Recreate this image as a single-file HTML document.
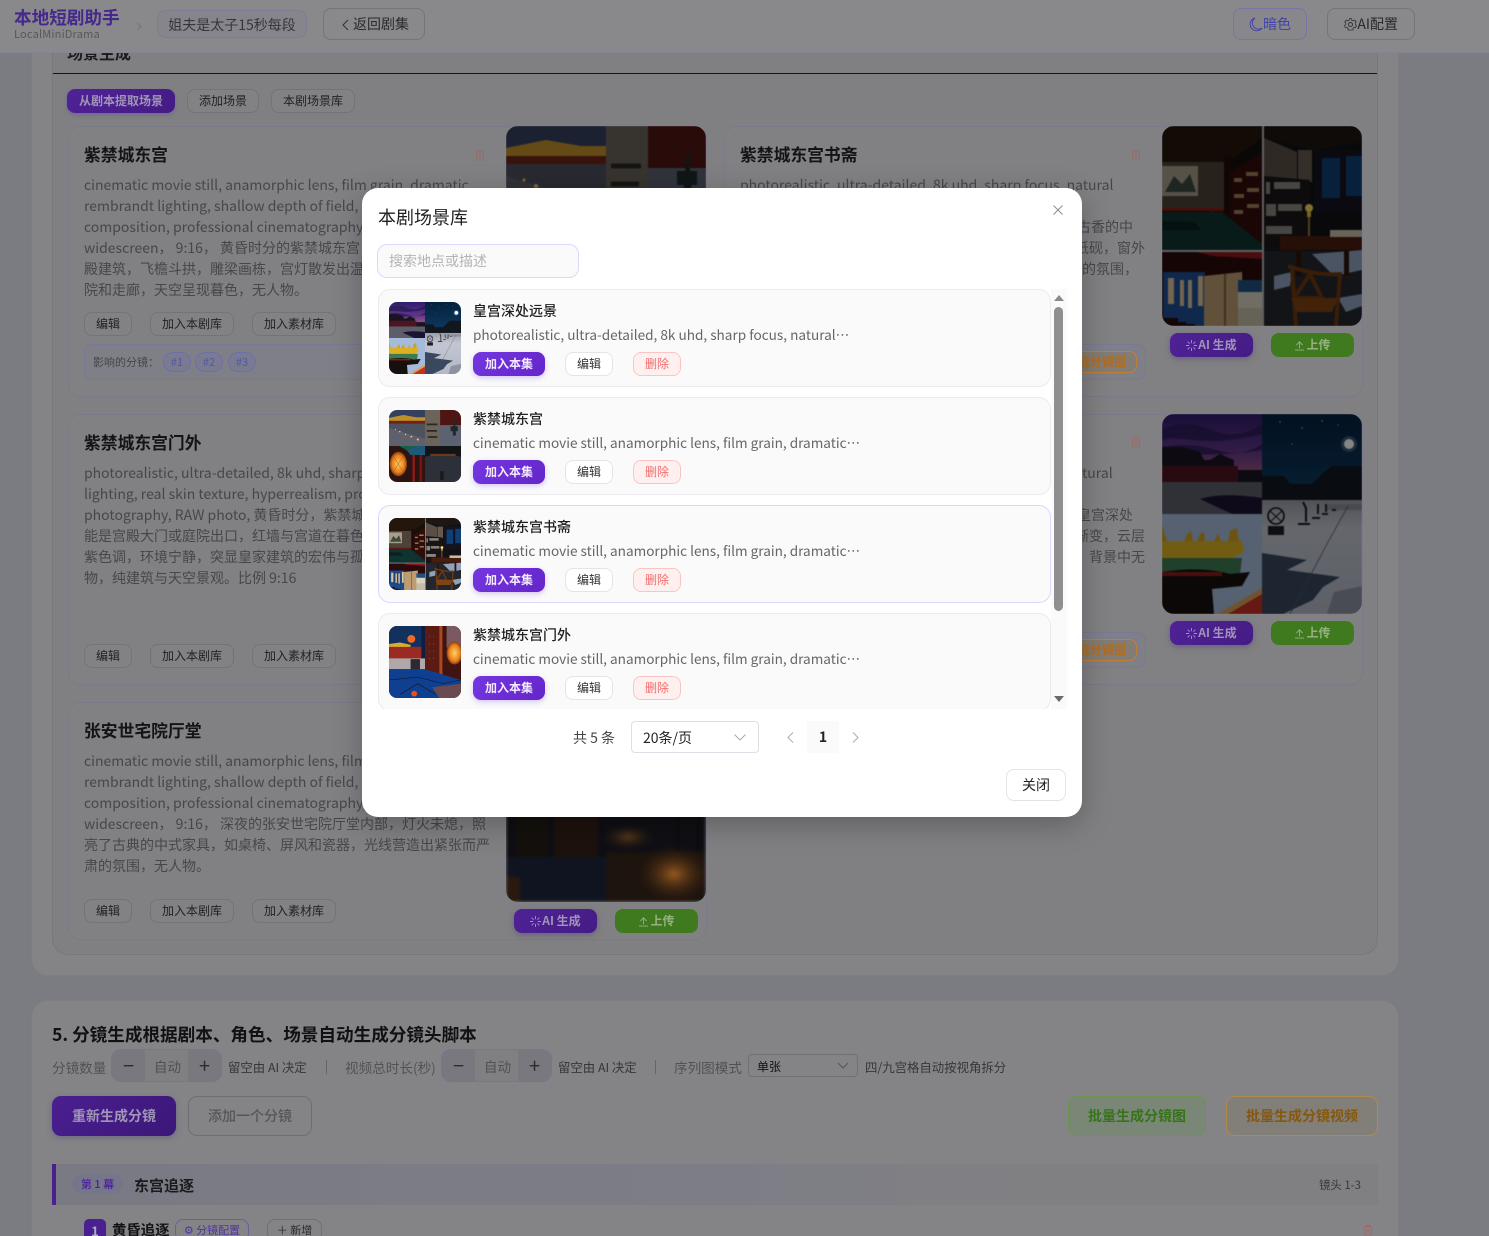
<!DOCTYPE html>
<html lang="zh"><head><meta charset="utf-8"><title>本剧场景库</title>
<style>
*{box-sizing:border-box;margin:0;padding:0}
html,body{width:1489px;height:1236px;overflow:hidden}
body{position:relative;background:#7b7b82;font-family:"Noto Sans CJK SC","Liberation Sans",sans-serif;color:#222}
.a{position:absolute;white-space:nowrap}
.panel{position:absolute;background:#848486;border-radius:16px;box-shadow:0 0 0 1px #7e7e82}
.inner{position:absolute;background:#808083;border:1px solid #77777c;border-top:none;border-radius:0 0 16px 16px}
.card{position:absolute;background:#818184;border:1px solid #7a7a88;border-radius:12px;width:639px}
.t{position:absolute;font-size:16.8px;font-weight:700;color:#141416;line-height:24px;white-space:nowrap}
.d{position:absolute;font-size:14px;line-height:21px;color:#47474b;white-space:nowrap}
.b{position:absolute;display:flex;align-items:center;justify-content:center;border:1px solid #737378;border-radius:8px;font-size:12px;color:#222226;white-space:nowrap;height:24px;background:#828285;padding-bottom:2px}
.img{position:absolute;width:200px;height:200px;border-radius:12px;overflow:hidden}
.img svg{display:block;width:200px;height:200px;filter:brightness(.52) blur(.4px)}
.ai{background:linear-gradient(135deg,#4f2296,#441c84);color:#a094b8;border:none;font-weight:700;box-shadow:0 2px 6px #66607e;border-radius:8px;width:83px;height:24px;font-size:12px;gap:1px}
.up{background:#3f7a1f;color:#98b086;border:none;font-weight:700;border-radius:8px;width:83px;height:24px;font-size:12px;gap:1px}
.ai svg,.up svg{width:11px;height:11px;filter:none;flex:none;margin-top:2px}
.aff{position:absolute;height:36px;width:406px;border:1px solid #787898;border-radius:8px;background:#7f7f88;font-size:11px;color:#454549;line-height:34px;padding-left:8px;white-space:nowrap}
.tag{position:absolute;top:7px;height:20px;width:28px;border:1px solid #6f6fa8;border-radius:10px;background:#7a7a90;color:#5058a8;font-size:11px;line-height:18px;text-align:center}
.modal{position:absolute;left:362px;top:188px;width:720px;height:629px;background:#fff;border-radius:16px;box-shadow:0 8px 30px rgba(0,0,0,.25)}
.list{position:absolute;left:378px;top:289px;width:689px;height:420px;overflow:hidden}
.item{position:absolute;left:0;width:673px;height:98px;background:#fafafa;border:1px solid #ebebef;border-radius:12px}
.th{position:absolute;left:10px;top:12px;width:72px;height:72px;border-radius:8px;overflow:hidden}
.th svg{display:block;width:72px;height:72px}
.n{position:absolute;left:94px;top:11px;font-size:14px;line-height:21px;color:#1f1f1f;font-weight:500;white-space:nowrap}
.s{position:absolute;left:94px;top:34px;font-size:13.6px;line-height:21px;color:#666;white-space:nowrap}
.add,.ed,.del{position:absolute;top:62px;height:24px;display:flex;align-items:center;justify-content:center;font-size:12px;border-radius:8px;padding-bottom:2px}
.add{left:94px;width:72px;background:linear-gradient(135deg,#7436e0,#6426c8);color:#f3eaff;font-weight:700;box-shadow:0 2px 6px #d5c5f5}
.ed{left:186px;width:48px;background:#fff;border:1px solid #e4e4e8;color:#333}
.del{left:254px;width:48px;background:#fff0f0;border:1px solid #fbc4c4;color:#f56c6c}
.ni{position:absolute;top:1049px;width:111px;height:33px;border:1px solid #767690;border-radius:10px;background:#808083;overflow:hidden}
.ni i{position:absolute;top:0;width:33px;height:33px;background:#78787e;color:#2c2c2c;font-style:normal;font-size:20px;line-height:29px;text-align:center}
.ni b{position:absolute;left:33px;width:45px;top:0;text-align:center;font-weight:400;font-size:13.6px;line-height:32px;color:#505055}
.h{position:absolute;font-size:13.6px;color:#525256;line-height:20px;white-space:nowrap}
.sm{position:absolute;font-size:12.4px;color:#36363a;line-height:18px;white-space:nowrap}
.big{position:absolute;top:1096px;height:40px;display:flex;align-items:center;justify-content:center;font-size:14px;font-weight:700;border-radius:9px;white-space:nowrap}
</style></head><body>
<div style="position:absolute;left:0;top:0;width:1489px;height:1236px;overflow:hidden">

<svg width="0" height="0" style="position:absolute"><defs>
<linearGradient id="gs1" x1="0" y1="0" x2="0" y2="1"><stop offset="0" stop-color="#2f1c6e"/><stop offset=".35" stop-color="#5e3488"/><stop offset=".6" stop-color="#9a5480"/></linearGradient>
<linearGradient id="gs2" x1="0" y1="0" x2="0" y2="1"><stop offset="0" stop-color="#05203e"/><stop offset=".4" stop-color="#0d3a60"/></linearGradient>
<linearGradient id="plz" x1="0" y1="0" x2="0" y2="1"><stop offset="0" stop-color="#9a9ea8"/><stop offset=".25" stop-color="#c2c6d2"/><stop offset="1" stop-color="#b4b8c6"/></linearGradient>
<radialGradient id="lan"><stop offset="0" stop-color="#ffd060"/><stop offset=".7" stop-color="#e8801c"/><stop offset="1" stop-color="#8a3a10"/></radialGradient>
<radialGradient id="glow"><stop offset="0" stop-color="#d8802c"/><stop offset="1" stop-color="#1c1410" stop-opacity="0"/></radialGradient>

<symbol id="sA" viewBox="0 0 200 200">
<rect width="100" height="100" fill="url(#gs1)"/>
<path d="M0 15Q25 5 50 16T100 10V20Q60 30 30 26T0 28ZM0 33Q30 28 55 36T100 30V36Q60 42 30 40T0 40Z" fill="#2a1a55" opacity=".8"/>
<path d="M0 33H20L38 38L42 46H48L58 40L72 46V56H100V68H0Z" fill="#191420"/>
<rect y="52" width="76" height="16" fill="#4c1620"/>
<rect y="68" width="100" height="32" fill="#5c5c6a"/>
<path d="M38 85Q60 78 100 84V100H70Z" fill="#1b1332"/>
<rect x="100" width="100" height="200" fill="url(#gs2)"/>
<circle cx="187" cy="30" r="5" fill="#fff"/><circle cx="187" cy="30" r="8" fill="#fff" opacity=".2"/>
<g fill="#fff"><circle cx="118" cy="8" r=".6"/><circle cx="140" cy="14" r=".6"/><circle cx="160" cy="7" r=".6"/><circle cx="130" cy="30" r=".5"/><circle cx="176" cy="11" r=".5"/></g>
<path d="M100 62H122L128 70H150L160 60L170 52H200V86H100Z" fill="#11171f"/>
<rect x="100" y="86" width="100" height="114" fill="url(#plz)"/>
<rect x="165" y="90" width="35" height="6" fill="#8a8e98"/>
<path d="M100 139L145 146L125 156L178 163L161 173L151 186L121 200H100Z" fill="#38485f"/>
<path d="M165 200L172 178L200 172V200Z" fill="#8e93a2"/>
<path d="M128 200L165 130L186 92" stroke="#555" stroke-width=".8" fill="none"/>
<circle cx="114" cy="102" r="8" fill="none" stroke="#111" stroke-width="1.6"/><path d="M108 97L120 108M120 97L108 108" stroke="#111"/><rect x="106" y="112" width="16" height="9" fill="#1d1d22"/>
<path d="M136 110h12M144 108V94l-3-6" stroke="#15151a" fill="none" stroke-width="2"/><path d="M150 104h8M156 100V90M160 100h6M164 98V90M170 96h4" stroke="#222" stroke-width="2"/>
<rect y="100" width="100" height="100" fill="#a6bada"/>
<path d="M0 110l5 18H0ZM22 128l3-8 4-3 2 11ZM35 128l3-8 4-2 1 10ZM52 128l4-9 3 9ZM66 128l2-11 7-3 2 14Z" fill="#d0a020"/>
<path d="M0 127H80L82 138L70 144H0Z" fill="#dcb020"/>
<path d="M0 144H80L78 160H0Z" fill="#3f7b52"/>
<path d="M0 158Q40 152 68 160L88 158L80 172L50 175L52 200H0Z" fill="#16100e"/>
<path d="M0 158H60V162H0Z" fill="#8c1c1a"/>
<path d="M60 200L100 177V200Z" fill="#c43022"/><path d="M55 200L100 174V180L66 200Z" fill="#d8a058"/>
</symbol>

<symbol id="sB" viewBox="0 0 200 200">
<rect width="100" height="100" fill="#33405f"/>
<path d="M0 22L40 14L75 20L100 20V36H0Z" fill="#c09028"/>
<rect y="30" width="100" height="8" fill="#6c2418"/>
<rect y="38" width="100" height="62" fill="#4e515e"/>
<path d="M0 50L100 80V100H0Z" fill="#5e606c"/>
<g fill="#ffc860"><circle cx="30" cy="60" r="2"/><circle cx="46" cy="68" r="2"/><circle cx="62" cy="74" r="2.5"/><circle cx="80" cy="82" r="3"/><circle cx="18" cy="54" r="1.5"/></g>
<rect x="100" width="100" height="100" fill="#4e1514"/>
<rect x="100" y="42" width="100" height="58" fill="#5c6272"/>
<rect x="100" width="42" height="100" fill="#6a645a"/>
<path d="M105 40h30M105 58h28M108 75h26" stroke="#2c2824" stroke-width="5"/>
<path d="M170 20V22M182 25L185 70L178 70Z M172 46H190V58H172Z" fill="#1e2828" stroke="#1e2828" stroke-width="2"/>
<rect y="100" width="100" height="100" fill="#2c1410"/>
<path d="M40 100H100V125H60Z" fill="#1d5a7a"/><path d="M28 100H80L50 112Z" fill="#14604a"/>
<rect x="65" y="125" width="7" height="75" fill="#8a1c1c"/><rect x="85" y="125" width="7" height="75" fill="#7a1414"/>
<ellipse cx="26" cy="150" rx="24" ry="34" fill="url(#lan)"/>
<path d="M14 130L38 170M38 130L14 170" stroke="#9a5018" stroke-width="1.2"/>
<rect x="100" y="100" width="100" height="100" fill="#131416"/>
<path d="M100 130Q150 115 200 130V200H100Z" fill="#2c3038"/><path d="M115 122h70v6h-70z" fill="#6a3a20"/>
<rect x="142" y="170" width="10" height="24" fill="#1a1a1a"/>
</symbol>

<symbol id="sC" viewBox="0 0 200 200">
<rect width="200" height="200" fill="#b8b8bc"/>
<rect width="100" height="124" fill="#14100c"/>
<path d="M0 0H100V12L60 40H0Z" fill="#24160c"/>
<rect y="36" width="62" height="46" fill="#4c4238"/>
<rect y="40" width="36" height="30" fill="#a89d88"/><path d="M3 66L12 50L20 58L28 48L34 66Z" fill="#3c4a42"/>
<rect x="62" y="30" width="8" height="70" fill="#1e0e08"/>
<path d="M68 100V46L100 26V118Z" fill="#300c0a"/>
<g stroke="#9c8058" stroke-width="4"><path d="M72 54h8M84 48h12M72 70h10M85 64h12M72 86h9M85 80h12"/></g>
<rect y="82" width="62" height="3" fill="#8c1a14"/><rect x="48" y="84" width="3" height="24" fill="#6a120e"/>
<path d="M0 86H60L100 118V124H0Z" fill="#0f332e"/><path d="M0 95L32 96L40 104H0Z" fill="#0a1f22"/>
<rect y="126" width="100" height="74" fill="#2a0a0a"/>
<path d="M35 126H100V133L50 130Z" fill="#8c181c"/>
<g fill="#1c4c90"><rect x="1" y="146" width="15" height="46"/><rect x="16" y="146" width="8" height="50"/><rect x="24" y="146" width="9" height="52"/><rect x="33" y="146" width="10" height="54"/></g>
<g fill="#dcc59c"><rect x="6" y="152" width="6" height="26"/><rect x="18" y="154" width="4" height="26"/><rect x="26" y="154" width="4" height="28"/><rect x="36" y="150" width="5" height="30"/></g>
<path d="M42 200V150L80 146L82 200Z" fill="#bc9c70"/><rect x="62" y="148" width="2" height="52" fill="#7a6040"/>
<rect x="76" y="154" width="24" height="12" fill="#205080"/><rect x="76" y="166" width="24" height="16" fill="#d8d4c0"/><rect x="76" y="182" width="24" height="18" fill="#c4bca4"/>
<rect x="102" width="98" height="200" fill="#111116"/>
<path d="M102 12L135 26V54H102Z" fill="#5a4e46"/><path d="M136 24H150V56H136Z" fill="#665a50"/>
<path d="M102 0H200V16L150 24L102 12Z" fill="#1d1612"/>
<rect x="152" y="24" width="48" height="62" fill="#14141f"/>
<g fill="#0e4076"><rect x="160" y="32" width="18" height="40"/><rect x="184" y="30" width="16" height="40"/></g>
<path d="M102 50L148 54V122L120 132H102Z" fill="#191517"/>
<g fill="#8a867e"><rect x="104" y="56" width="4" height="12"/><rect x="112" y="56" width="26" height="7"/><rect x="104" y="78" width="10" height="12"/><rect x="116" y="78" width="24" height="7"/><rect x="104" y="100" width="26" height="8"/></g>
<circle cx="147" cy="82" r="4" fill="#f8d860"/><rect x="145" y="85" width="4" height="6" fill="#dcc040"/><rect x="146" y="91" width="2" height="20" fill="#9a7a30"/>
<rect x="102" y="125" width="98" height="75" fill="#24262e"/>
<path d="M150 128L200 124V144L172 150ZM176 172L200 168V180L184 186ZM112 150L130 146L128 160L112 164Z" fill="#8ea2bc"/>
<path d="M118 110H200V124H118Z" fill="#4a1c0c"/><rect x="134" y="124" width="5" height="26" fill="#2c140a"/><rect x="182" y="124" width="5" height="26" fill="#2c140a"/>
<rect x="168" y="104" width="32" height="7" fill="#c8c0a8"/>
<path d="M126 140Q155 150 180 148M130 142L134 200M178 148L174 200M148 148L160 172H132Z" stroke="#6e380e" stroke-width="4" fill="none"/>
<path d="M130 172H176L170 186H134Z" fill="#7e4412"/>
</symbol>

<symbol id="sD" viewBox="0 0 200 200">
<rect width="200" height="200" fill="#101c40"/>
<rect width="90" height="80" fill="#12315e"/>
<path d="M0 50L30 46L60 52V60H0Z" fill="#d8ac30"/><rect y="58" width="90" height="34" fill="#9a2a22"/>
<circle cx="62" cy="36" r="11" fill="#f06a28"/>
<path d="M100 0H200V160H100Z" fill="#401410"/>
<path d="M100 0H150V165H100Z" fill="#5a1c12"/><rect x="140" y="0" width="8" height="160" fill="#a84a20"/>
<g fill="#d08a4a"><circle cx="112" cy="30" r="1"/><circle cx="124" cy="30" r="1"/><circle cx="112" cy="50" r="1"/><circle cx="124" cy="50" r="1"/><circle cx="112" cy="70" r="1"/><circle cx="124" cy="70" r="1"/><circle cx="112" cy="90" r="1"/><circle cx="124" cy="90" r="1"/></g>
<rect x="160" y="0" width="40" height="60" fill="#7a5a60"/>
<ellipse cx="182" cy="75" rx="22" ry="32" fill="url(#lan)"/>
<rect y="90" width="100" height="30" fill="#b0a8a8"/><rect x="60" y="92" width="26" height="40" fill="#2a2a30"/>
<path d="M0 120H100L200 150V200H0Z" fill="#0f3f90"/>
<path d="M0 150L80 142L150 160L200 150M30 190L80 160L130 190" stroke="#18120c" stroke-width="1.5" fill="none"/>
<circle cx="70" cy="188" r="8" fill="#e8501c"/><path d="M120 170L200 160V200H140Z" fill="#6a4a50"/>
</symbol>

<symbol id="sE" viewBox="0 0 200 200">
<rect width="100" height="200" fill="#14141c"/>
<rect x="10" width="32" height="180" fill="#1c1812"/><rect x="48" width="44" height="170" fill="#2a1a12"/>
<rect y="155" width="100" height="45" fill="#161c2e"/>
<rect x="0" y="175" width="14" height="25" fill="#3a2416"/>
<rect x="100" width="100" height="200" fill="#15161e"/>
<path d="M100 150H200V200H100Z" fill="#2a1c14"/>
<ellipse cx="168" cy="172" rx="42" ry="32" fill="url(#glow)"/>
<ellipse cx="122" cy="135" rx="30" ry="15" fill="url(#glow)" opacity=".55"/>
<path d="M168 110H196M172 110V148M192 110V148" stroke="#14100e" stroke-width="3" fill="none"/>
</symbol>
<symbol id="tr" viewBox="0 0 12 14"><path d="M1 3H11M4 3V1H8V3M2 3V13H10V3M5 6V10M7 6V10" fill="none" stroke="currentColor"/></symbol>
<symbol id="sp" viewBox="0 0 12 12"><path d="M6 0V3.5M6 8.5V12M0 6H3.5M8.5 6H12M1.8 1.8L4 4M8 8L10.2 10.2M10.2 1.8L8 4M4 8L1.8 10.2" stroke="currentColor" fill="none"/></symbol>
<symbol id="ul" viewBox="0 0 12 12"><path d="M6 9V2M2.5 5.5L6 2L9.5 5.5M1 11H11" stroke="currentColor" fill="none"/></symbol>
</defs></svg>

<!-- background page -->
<div class="panel" style="left:32px;top:-20px;width:1366px;height:995px"></div>
<div class="inner" style="left:52px;top:0;width:1326px;height:955px"></div>
<div class="a" style="left:67px;top:40px;font-size:16px;font-weight:700;line-height:24px;color:#1c1c1e">场景生成</div>
<div class="a" style="left:53px;top:73px;width:1324px;height:1px;background:#141414"></div>

<div class="b" style="left:67px;top:89px;width:108px;background:linear-gradient(135deg,#4f2296,#441c84);border:none;color:#a094b8;font-weight:700;box-shadow:0 2px 5px #6f6a8a">从剧本提取场景</div>
<div class="b" style="left:187px;top:89px;width:72px">添加场景</div>
<div class="b" style="left:271px;top:89px;width:84px">本剧场景库</div>

<!-- card 1 -->
<div class="card" style="left:68px;top:126px;height:271px"></div>
<div class="t" style="left:84px;top:142px">紫禁城东宫</div>
<svg class="a" style="left:475px;top:149px;color:#a26660" width="10" height="12"><use href="#tr"/></svg>
<div class="d" style="left:84px;top:175px">cinematic movie still, anamorphic lens, film grain, dramatic<br>rembrandt lighting, shallow depth of field, cinematic<br>composition, professional cinematography, color graded,<br>widescreen， 9:16， 黄昏时分的紫禁城东宫，金碧辉煌的宫<br>殿建筑，飞檐斗拱，雕梁画栋，宫灯散发出温暖的光芒，庭<br>院和走廊，天空呈现暮色，无人物。</div>
<div class="b" style="left:84px;top:312px;width:48px">编辑</div>
<div class="b" style="left:150px;top:312px;width:84px">加入本剧库</div>
<div class="b" style="left:252px;top:312px;width:84px">加入素材库</div>
<div class="aff" style="left:84px;top:344px">影响的分镜：<span class="tag" style="left:78px">#1</span><span class="tag" style="left:110px">#2</span><span class="tag" style="left:143px">#3</span></div>
<div class="img" style="left:506px;top:126px"><svg viewBox="0 0 200 200"><use href="#sB"/></svg></div>

<!-- card 2 right-top -->
<div class="card" style="left:724px;top:126px;height:271px"></div>
<div class="t" style="left:740px;top:142px">紫禁城东宫书斋</div>
<svg class="a" style="left:1131px;top:149px;color:#a26660" width="10" height="12"><use href="#tr"/></svg>
<div class="d" style="left:740px;top:175px">photorealistic, ultra-detailed, 8k uhd, sharp focus, natural</div>
<div class="d" style="left:1063px;top:217px;text-align:right;width:70px">古香的中</div>
<div class="d" style="left:1075px;top:238px;width:70px;text-align:right">纸砚，窗外</div>
<div class="d" style="left:1068px;top:259px;width:70px;text-align:right">问的氛围，</div>
<div class="aff" style="left:740px;top:344px"></div>
<div class="a" style="left:1040px;top:351px;width:97px;height:22px;border:1px solid #c08038;border-radius:8px;background:#837c74;color:#b06c22;font-size:12px;font-weight:700;line-height:19px;text-align:right;padding-right:10px">生成分镜图</div>
<div class="img" style="left:1162px;top:126px"><svg viewBox="0 0 200 200"><use href="#sC"/></svg></div>
<div class="b ai" style="left:1170px;top:333px"><svg><use href="#sp"/></svg>AI 生成</div>
<div class="b up" style="left:1271px;top:333px"><svg><use href="#ul"/></svg>上传</div>

<!-- card left 2 -->
<div class="card" style="left:68px;top:414px;height:271px"></div>
<div class="t" style="left:84px;top:430px">紫禁城东宫门外</div>
<div class="d" style="left:84px;top:463px">photorealistic, ultra-detailed, 8k uhd, sharp focus, natural<br>lighting, real skin texture, hyperrealism, professional<br>photography, RAW photo, 黄昏时分，紫禁城东宫门外，<br>能是宫殿大门或庭院出口，红墙与宫道在暮色中延伸，<br>紫色调，环境宁静，突显皇家建筑的宏伟与孤寂，无人<br>物，纯建筑与天空景观。比例 9:16</div>
<div class="b" style="left:84px;top:644px;width:48px">编辑</div>
<div class="b" style="left:150px;top:644px;width:84px">加入本剧库</div>
<div class="b" style="left:252px;top:644px;width:84px">加入素材库</div>

<!-- card right 2 -->
<div class="card" style="left:724px;top:414px;height:271px"></div>
<svg class="a" style="left:1131px;top:436px;color:#a26660" width="10" height="12"><use href="#tr"/></svg>
<div class="d" style="left:1082px;top:463px">tural</div>
<div class="d" style="left:1063px;top:505px;width:70px;text-align:right">皇宫深处</div>
<div class="d" style="left:1075px;top:526px;width:70px;text-align:right">渐变，云层</div>
<div class="d" style="left:1075px;top:547px;width:70px;text-align:right">背景中无</div>
<div class="aff" style="left:740px;top:632px"></div>
<div class="a" style="left:1040px;top:639px;width:97px;height:22px;border:1px solid #c08038;border-radius:8px;background:#837c74;color:#b06c22;font-size:12px;font-weight:700;line-height:19px;text-align:right;padding-right:10px">生成分镜图</div>
<div class="img" style="left:1162px;top:414px"><svg viewBox="0 0 200 200"><use href="#sA"/></svg></div>
<div class="b ai" style="left:1170px;top:621px"><svg><use href="#sp"/></svg>AI 生成</div>
<div class="b up" style="left:1271px;top:621px"><svg><use href="#ul"/></svg>上传</div>

<!-- card 3 -->
<div class="card" style="left:68px;top:702px;height:238px"></div>
<div class="t" style="left:84px;top:718px">张安世宅院厅堂</div>
<div class="d" style="left:84px;top:751px">cinematic movie still, anamorphic lens, film grain, dramatic<br>rembrandt lighting, shallow depth of field, cinematic<br>composition, professional cinematography, color graded,<br>widescreen， 9:16， 深夜的张安世宅院厅堂内部，灯火未熄，照<br>亮了古典的中式家具，如桌椅、屏风和瓷器，光线营造出紧张而严<br>肃的氛围，无人物。</div>
<div class="b" style="left:84px;top:899px;width:48px">编辑</div>
<div class="b" style="left:150px;top:899px;width:84px">加入本剧库</div>
<div class="b" style="left:252px;top:899px;width:84px">加入素材库</div>
<div class="img" style="left:506px;top:702px"><svg viewBox="0 0 200 200" style="filter:brightness(.7) blur(1.5px)"><use href="#sE"/></svg></div>
<div class="b ai" style="left:514px;top:909px"><svg><use href="#sp"/></svg>AI 生成</div>
<div class="b up" style="left:615px;top:909px"><svg><use href="#ul"/></svg>上传</div>

<!-- section 5 -->
<div class="panel" style="left:32px;top:1001px;width:1366px;height:300px"></div>
<div class="a" style="left:52px;top:1021px;font-size:17.6px;font-weight:700;line-height:27px;color:#111113">5. 分镜生成根据剧本、角色、场景自动生成分镜头脚本</div>
<div class="h" style="left:52px;top:1057px">分镜数量</div>
<div class="ni" style="left:111px"><i style="left:0">−</i><b>自动</b><i style="right:0">+</i></div>
<div class="sm" style="left:228px;top:1058px">留空由 AI 决定</div>
<div class="a" style="left:326px;top:1060px;width:1px;height:14px;background:#66666a"></div>
<div class="h" style="left:345px;top:1057px">视频总时长(秒)</div>
<div class="ni" style="left:441px"><i style="left:0">−</i><b>自动</b><i style="right:0">+</i></div>
<div class="sm" style="left:558px;top:1058px">留空由 AI 决定</div>
<div class="a" style="left:655px;top:1060px;width:1px;height:14px;background:#66666a"></div>
<div class="h" style="left:674px;top:1057px">序列图模式</div>
<div class="a" style="left:748px;top:1054px;width:110px;height:23px;border:1px solid #707074;border-radius:4px;font-size:12px;line-height:23px;padding-left:8px;color:#111">单张<svg style="position:absolute;right:8px;top:7px" width="12" height="8"><path d="M1 1L6 6L11 1" fill="none" stroke="#555"/></svg></div>
<div class="sm" style="left:865px;top:1058px">四/九宫格自动按视角拆分</div>
<div class="big" style="left:52px;width:124px;background:linear-gradient(135deg,#4a1f90,#3c1778);color:#a094b8;box-shadow:0 2px 6px #6a6a80">重新生成分镜</div>
<div class="big" style="left:188px;width:124px;border:1px solid #6e6e72;color:#55555a;font-weight:500">添加一个分镜</div>
<div class="big" style="left:1068px;width:138px;border:1px solid #6a9450;background:#7a8676;color:#36741a">批量生成分镜图</div>
<div class="big" style="left:1226px;width:152px;border:1px solid #b08a4a;background:#827e78;color:#855810">批量生成分镜视频</div>

<div class="a" style="left:52px;top:1164px;width:1326px;height:41px;background:linear-gradient(90deg,#7a7a84,#7d7d86 50%,#808083 75%);border-left:4px solid #4a2090"></div>
<div class="a" style="left:72px;top:1174px;width:51px;height:20px;border-radius:10px;background:#76768a;color:#48229a;font-size:11px;font-weight:500;line-height:20px;text-align:center">第 1 幕</div>
<div class="a" style="left:134px;top:1175px;font-size:15px;font-weight:700;line-height:22px;color:#1a1a1d">东宫追逐</div>
<div class="sm" style="left:1319px;top:1176px;font-size:11.4px;color:#38383c">镜头 1-3</div>
<div class="a" style="left:84px;top:1219px;width:22px;height:22px;border-radius:5px;background:#4a2090;color:#b4aac8;font-size:13px;font-weight:700;line-height:24px;text-align:center">1</div>
<div class="a" style="left:112px;top:1219px;font-size:14.4px;font-weight:700;line-height:22px;color:#131316">黄昏追逐</div>
<div class="a" style="left:175px;top:1219px;width:74px;height:22px;border:1px solid #6a5ea0;border-radius:8px;color:#5234a0;font-size:11px;line-height:20px;text-align:center">⚙ 分镜配置</div>
<div class="a" style="left:267px;top:1219px;width:55px;height:22px;border:1px solid #707074;border-radius:8px;color:#2c2c2c;font-size:11px;line-height:20px;text-align:center">＋ 新增</div>
<svg class="a" style="left:1363px;top:1224px;color:#a26660" width="10" height="12"><use href="#tr"/></svg>

<!-- header -->
<div class="a" style="left:0;top:0;width:1489px;height:53px;background:#89898c;border-bottom:1px solid #848496"></div>
<div class="a" style="left:14px;top:5px;font-size:17.6px;font-weight:700;line-height:26px;color:#46288c">本地短剧助手</div>
<div class="a" style="left:14px;top:26px;font-size:11px;line-height:16px;color:#57575e;letter-spacing:.2px">LocalMiniDrama</div>
<svg class="a" style="left:136px;top:22px" width="6" height="9"><path d="M1 1L5 4.5L1 8" fill="none" stroke="#757578"/></svg>
<div class="a" style="left:157px;top:10px;width:150px;height:28px;border:1px solid #7c7c94;border-radius:8px;background:#85858b;font-size:14px;line-height:28px;text-align:center;color:#36363c">姐夫是太子15秒每段</div>
<div class="a" style="left:323px;top:8px;width:102px;height:32px;border:1px solid #757578;border-radius:8px;font-size:14px;line-height:30px;text-align:center;color:#2a2a2e"><svg style="position:absolute;left:18px;top:10px" width="7" height="12"><path d="M6 1L1 6L6 11" fill="none" stroke="#333"/></svg><span style="padding-left:14px">返回剧集</span></div>
<div class="a" style="left:1233px;top:8px;width:74px;height:32px;border:1px solid #7676a4;border-radius:8px;background:#87878c;font-size:14px;line-height:30px;text-align:right;padding-right:15px;color:#4444a4"><svg style="position:absolute;left:15px;top:8px" width="14" height="15"><path d="M6 1A6.5 6.5 0 1 0 13 11A6 6 0 0 1 6 1Z" fill="none" stroke="#4444a4"/></svg>暗色</div>
<div class="a" style="left:1327px;top:8px;width:88px;height:32px;border:1px solid #757578;border-radius:8px;font-size:14px;line-height:30px;text-align:right;padding-right:16px;color:#2a2a2e"><svg style="position:absolute;left:16px;top:9px" width="13" height="13" viewBox="0 0 13 13"><circle cx="6.5" cy="6.5" r="2" fill="none" stroke="#333"/><path d="M5.5.7H7.5L7.9 2.3L9.4 2.9L10.8 2L12.2 3.7L11.2 5L11.4 6.5L12.5 7.5L11.7 9.4L10.1 9.2L9 10.3L9 12H6.5H4L4 10.3L2.9 9.4L1.3 9.6L.5 7.6L1.7 6.5L1.8 5L.8 3.7L2.2 2L3.6 2.9L5.1 2.3Z" fill="none" stroke="#333" stroke-width=".8"/></svg>AI配置</div>

<!-- modal -->
<div class="modal"></div>
<div class="a" style="left:378px;top:204px;font-size:18px;line-height:27px;color:#1f1f1f">本剧场景库</div>
<svg class="a" style="left:1053px;top:205px" width="10" height="10"><path d="M.5 .5L9.5 9.5M9.5 .5L.5 9.5" stroke="#8c8c8c"/></svg>
<div class="a" style="left:377px;top:244px;width:202px;height:34px;border:1px solid #ddd6fe;border-radius:10px;background:#fafafa;font-size:14px;line-height:32px;padding-left:11px;color:#b4b4b8">搜索地点或描述</div>

<div class="list">
<div class="item" style="top:0"><div class="th"><svg viewBox="0 0 200 200"><use href="#sA"/></svg></div><div class="n">皇宫深处远景</div><div class="s">photorealistic, ultra-detailed, 8k uhd, sharp focus, natural…</div><div class="add">加入本集</div><div class="ed">编辑</div><div class="del">删除</div></div>
<div class="item" style="top:108px"><div class="th"><svg viewBox="0 0 200 200"><use href="#sB"/></svg></div><div class="n">紫禁城东宫</div><div class="s">cinematic movie still, anamorphic lens, film grain, dramatic…</div><div class="add">加入本集</div><div class="ed">编辑</div><div class="del">删除</div></div>
<div class="item" style="top:216px;border-color:#ddd6fe"><div class="th"><svg viewBox="0 0 200 200"><use href="#sC"/></svg></div><div class="n">紫禁城东宫书斋</div><div class="s">cinematic movie still, anamorphic lens, film grain, dramatic…</div><div class="add">加入本集</div><div class="ed">编辑</div><div class="del">删除</div></div>
<div class="item" style="top:324px"><div class="th"><svg viewBox="0 0 200 200"><use href="#sD"/></svg></div><div class="n">紫禁城东宫门外</div><div class="s">cinematic movie still, anamorphic lens, film grain, dramatic…</div><div class="add">加入本集</div><div class="ed">编辑</div><div class="del">删除</div></div>
<div class="a" style="left:673px;top:0;width:16px;height:420px;background:#fafafa"></div>
<svg class="a" style="left:676px;top:6px" width="10" height="6"><path d="M5 0L10 6H0Z" fill="#8a8a8a"/></svg>
<div class="a" style="left:676px;top:18px;width:9px;height:304px;border-radius:5px;background:#8f8f8f"></div>
<svg class="a" style="left:676px;top:407px" width="10" height="6"><path d="M0 0H10L5 6Z" fill="#6a6a6a"/></svg>
</div>

<div class="a" style="left:573px;top:728px;font-size:14px;line-height:21px;color:#444">共 5 条</div>
<div class="a" style="left:631px;top:721px;width:128px;height:32px;border:1px solid #dcdfe6;border-radius:4px;font-size:14px;line-height:32px;padding-left:11px;color:#222">20条/页<svg style="position:absolute;right:12px;top:12px" width="12" height="7"><path d="M.5 .5L6 6L11.5 .5" fill="none" stroke="#a8abb2"/></svg></div>
<svg class="a" style="left:787px;top:732px" width="7" height="11"><path d="M6 .5L1 5.5L6 10.5" fill="none" stroke="#a8abb2"/></svg>
<div class="a" style="left:807px;top:721px;width:32px;height:32px;background:#fafafa;font-size:14px;font-weight:700;line-height:33px;text-align:center;color:#222">1</div>
<svg class="a" style="left:852px;top:732px" width="7" height="11"><path d="M1 .5L6 5.5L1 10.5" fill="none" stroke="#a8abb2"/></svg>
<div class="a" style="left:1006px;top:769px;width:60px;height:32px;border:1px solid #e4e4e8;border-radius:8px;background:#fff;font-size:14px;line-height:30px;text-align:center;color:#222">关闭</div>
</div>
</body></html>
